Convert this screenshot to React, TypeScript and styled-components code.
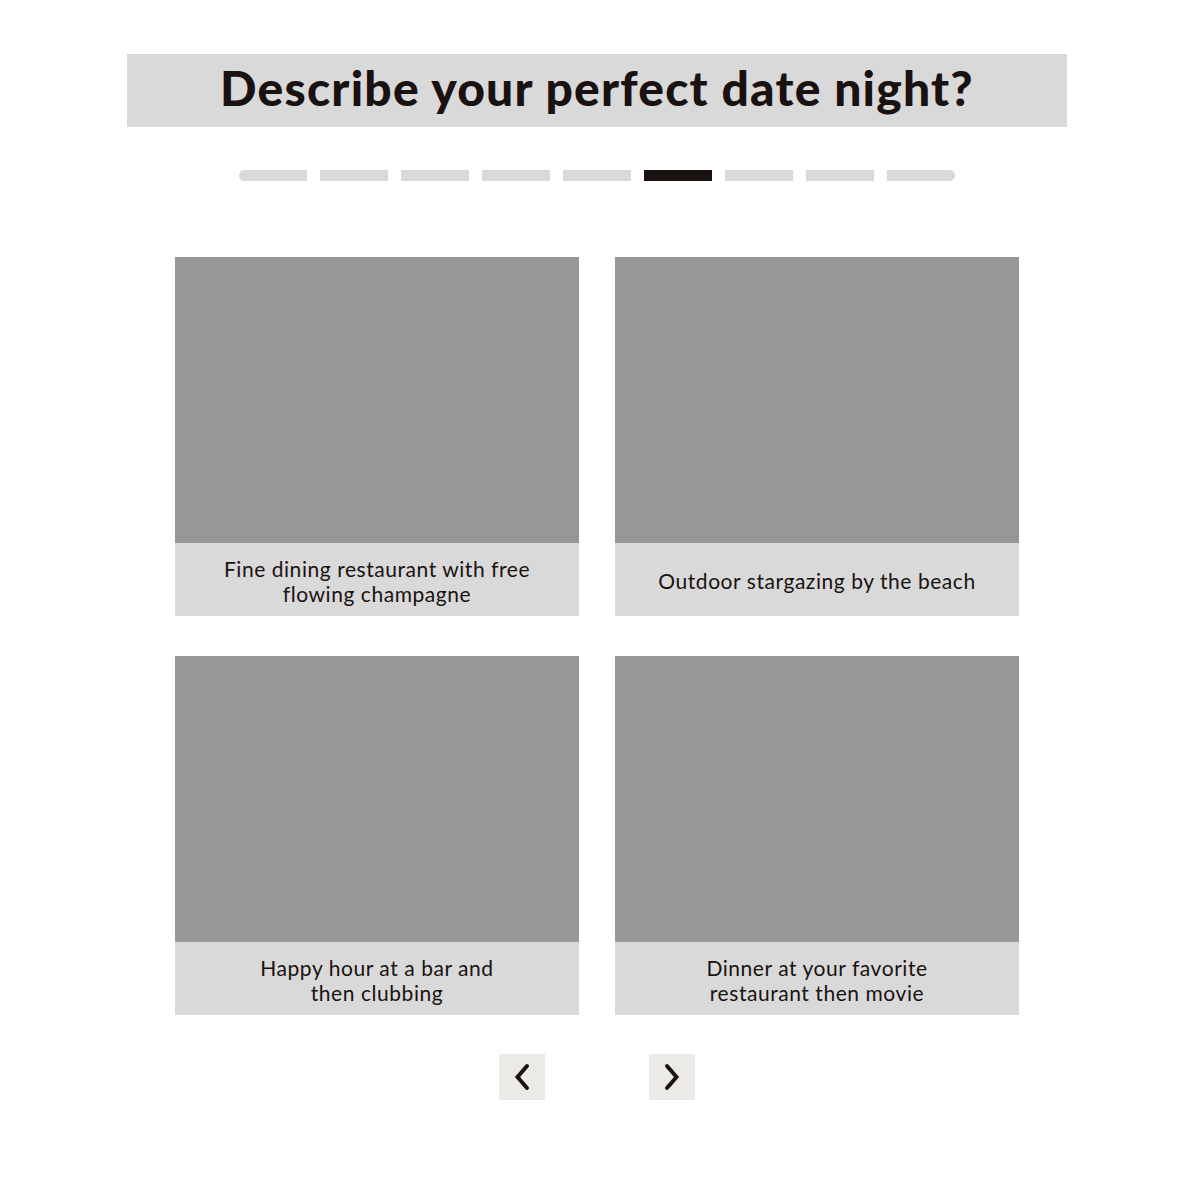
import React from "react";
import styled, { createGlobalStyle } from "styled-components";

const Global = createGlobalStyle`
  html, body { margin: 0; padding: 0; background: #ffffff; }
  body { font-family: "Lato", "Noto Sans", sans-serif; color: #1a1210; }
`;

const Page = styled.div`
  display: flex;
  flex-direction: column;
  align-items: center;
  padding-top: 54px;
  padding-bottom: 78px;
`;

const Header = styled.div`
  width: 940px;
  height: 73px;
  background: #d9d9d9;
  display: flex;
  align-items: center;
  justify-content: center;
`;

const Title = styled.h1`
  margin: 0 0 5px 0;
  font-family: "Lato", sans-serif;
  font-weight: 900;
  font-size: 48px;
  line-height: 1;
  color: #1a1210;
  letter-spacing: 1.2px;
`;

const Progress = styled.div`
  margin-top: 43px;
  display: flex;
  gap: 13px;
`;

const Segment = styled.div<{ $active?: boolean; $first?: boolean; $last?: boolean }>`
  width: 68px;
  height: 11px;
  background: ${(p) => (p.$active ? "#1a1210" : "#d9d9d9")};
  border-radius: ${(p) =>
    p.$first ? "6px 0 0 6px" : p.$last ? "0 6px 6px 0" : "0"};
`;

const Grid = styled.div`
  margin-top: 76px;
  display: grid;
  grid-template-columns: 404px 404px;
  column-gap: 36px;
  row-gap: 40px;
`;

const Card = styled.div`
  display: flex;
  flex-direction: column;
  width: 404px;
`;

const Photo = styled.div`
  height: 286px;
  background: #979797;
`;

const Caption = styled.div`
  height: 73px;
  background: #d9d9d9;
  display: flex;
  align-items: center;
  justify-content: center;
  text-align: center;
  padding: 2px 30px 0;
  box-sizing: border-box;
  font-family: "Lato", sans-serif;
  font-weight: 400;
  font-size: 21px;
  line-height: 25px;
  letter-spacing: 0.55px;
  color: #1a1210;
`;

const Nav = styled.div`
  margin-top: 39px;
  display: flex;
  gap: 104px;
`;

const NavButton = styled.button`
  width: 46px;
  height: 46px;
  border: none;
  padding: 0;
  background: #ebeae6;
  display: flex;
  align-items: center;
  justify-content: center;
  cursor: pointer;
`;

const Chevron = ({ dir }: { dir: "left" | "right" }) => (
  <svg width="20" height="30" viewBox="0 0 20 30">
    <polyline
      points={dir === "left" ? "15,4 5.5,15 15,26" : "5,4 14.5,15 5,26"}
      fill="none"
      stroke="#1a1210"
      strokeWidth="4"
      strokeLinecap="round"
      strokeLinejoin="miter"
    />
  </svg>
);

const options = [
  ["Fine dining restaurant with free", "flowing champagne"],
  ["Outdoor stargazing by the beach"],
  ["Happy hour at a bar and", "then clubbing"],
  ["Dinner at your favorite", "restaurant then movie"],
];

export default function App() {
  return (
    <>
      <Global />
      <Page>
        <Header>
          <Title>Describe your perfect date night?</Title>
        </Header>
        <Progress>
          {Array.from({ length: 9 }).map((_, i) => (
            <Segment key={i} $active={i === 5} $first={i === 0} $last={i === 8} />
          ))}
        </Progress>
        <Grid>
          {options.map((lines, i) => (
            <Card key={i}>
              <Photo />
              <Caption>
                <span>
                  {lines.map((l, j) => (
                    <React.Fragment key={j}>
                      {j > 0 && <br />}
                      {l}
                    </React.Fragment>
                  ))}
                </span>
              </Caption>
            </Card>
          ))}
        </Grid>
        <Nav>
          <NavButton aria-label="Previous">
            <Chevron dir="left" />
          </NavButton>
          <NavButton aria-label="Next">
            <Chevron dir="right" />
          </NavButton>
        </Nav>
      </Page>
    </>
  );
}
